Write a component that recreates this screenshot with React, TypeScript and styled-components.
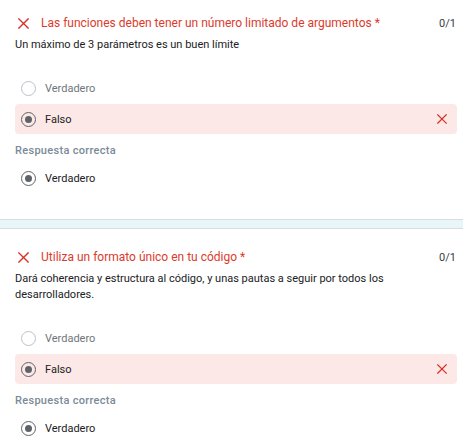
import React from 'react';
import styled, {createGlobalStyle} from 'styled-components';

const GlobalStyle = createGlobalStyle`
    body {
        margin: 0;
        background: #ffffff;
        font-family: Roboto, "Liberation Sans", sans-serif;
        overflow: hidden;
    }
`

type Question = {
    title: string
    hint: string
    chosen: string
    correct: string
}

const questions: Question[] = [
    {
        title: 'Las funciones deben tener un número limitado de argumentos *',
        hint: 'Un máximo de 3 parámetros es un buen límite',
        chosen: 'Falso',
        correct: 'Verdadero',
    },
    {
        title: 'Utiliza un formato único en tu código *',
        hint: 'Dará coherencia y estructura al código, y unas pautas a seguir por todos los desarrolladores.',
        chosen: 'Falso',
        correct: 'Verdadero',
    },
]

const options = ['Verdadero', 'Falso']

const Cross = ({size = 11}: { size?: number }) => (
    <svg width={size} height={size} viewBox="0 0 12 12">
        <path d="M1 1L11 11M11 1L1 11" stroke="#d93025" strokeWidth="1.5" strokeLinecap="square"/>
    </svg>
)

const Radio = ({checked}: { checked: boolean }) => (
    <RadioCircle checked={checked}>
        {checked && <RadioDot/>}
    </RadioCircle>
)

const QuestionCard = ({q}: { q: Question }) => (
    <Card>
        <TitleRow>
            <TitleIcon><Cross/></TitleIcon>
            <Title>{q.title}</Title>
            <Score>0/1</Score>
        </TitleRow>
        <Hint>{q.hint}</Hint>
        <Options>
            {options.map(opt => {
                const picked = opt === q.chosen
                const wrong = picked && opt !== q.correct
                return (
                    <Option key={opt} wrong={wrong}>
                        <Radio checked={picked}/>
                        <OptionText picked={picked}>{opt}</OptionText>
                        {wrong && <Cross size={10}/>}
                    </Option>
                )
            })}
        </Options>
        <CorrectLabel>Respuesta correcta</CorrectLabel>
        <Option>
            <Radio checked/>
            <OptionText picked>{q.correct}</OptionText>
        </Option>
    </Card>
)

export default function App() {
    return (
        <Page>
            <GlobalStyle/>
            <QuestionCard q={questions[0]}/>
            <Separator/>
            <QuestionCard q={questions[1]}/>
        </Page>
    )
}

const Page = styled.div`
    width: 463px;
    margin-top: -5px;
`
const Card = styled.section`
    padding: 18px 6px 26px 15px;
`
const TitleRow = styled.div`
    display: flex;
    align-items: center;
    height: 20px;
`
const TitleIcon = styled.span`
    display: flex;
    margin-left: 3px;
    margin-right: 12px;
`
const Title = styled.span`
    flex: 1;
    font-size: 12px;
    color: #dc3a2c;
`
const Score = styled.span`
    font-size: 11px;
    color: #3c4043;
    padding-right: 1px;
`
const Hint = styled.p`
    margin: 4px 0 0;
    font-size: 11px;
    line-height: 16px;
    color: #202124;
    padding-right: 20px;
`
const Options = styled.div`
    display: flex;
    flex-direction: column;
    gap: 1px;
    margin-top: 20px;
`
const Option = styled.div<{ wrong?: boolean }>`
    display: flex;
    align-items: center;
    height: 30px;
    padding: 0 10px 0 6px;
    border-radius: 4px;
    background: ${p => p.wrong ? '#fce8e6' : 'transparent'};
`
const RadioCircle = styled.span<{ checked: boolean }>`
    box-sizing: border-box;
    width: 15px;
    height: 15px;
    border-radius: 50%;
    border: 1.5px solid ${p => p.checked ? '#5f6368' : '#bdc1c6'};
    display: flex;
    align-items: center;
    justify-content: center;
    margin-right: 9px;
`
const RadioDot = styled.span`
    width: 7px;
    height: 7px;
    border-radius: 50%;
    background: #5f6368;
`
const OptionText = styled.span<{ picked?: boolean }>`
    flex: 1;
    font-size: 11px;
    color: ${p => p.picked ? '#202124' : '#70757a'};
`
const CorrectLabel = styled.div`
    margin: 9px 0 4px;
    font-size: 11px;
    line-height: 16px;
    font-weight: 500;
    letter-spacing: 0.3px;
    color: #7b8a98;
`
const Separator = styled.div`
    height: 8px;
    background: #e8f5f9;
    border-top: 1px solid #dadce0;
    border-bottom: 1px solid #dadce0;
`
